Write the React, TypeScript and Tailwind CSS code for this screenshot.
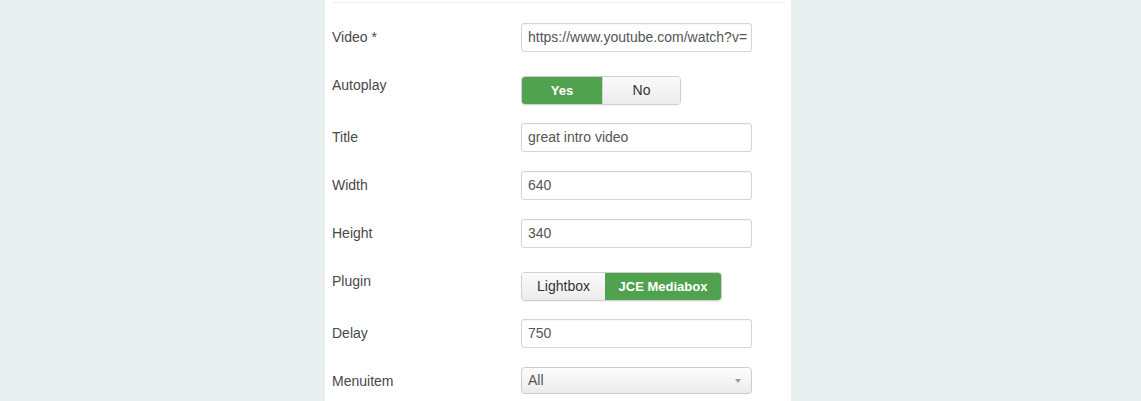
import React from "react";

const FONT = { fontFamily: '"Liberation Sans", Arial, sans-serif' };

function Label({ children }: { children: React.ReactNode }) {
  return <div className="w-[189px] shrink-0 pt-[5px] text-[14px] leading-[18px] text-[#484848]">{children}</div>;
}

function TextRow({ label, value }: { label: string; value: string }) {
  return (
    <div className="flex items-start mb-[19px]">
      <Label>{label}</Label>
      <div className="h-[29px] w-[231px] rounded-[3px] border border-[#d4d4d4] bg-white pl-[6px] flex items-center overflow-hidden shadow-[inset_0_1px_1px_rgba(0,0,0,0.04)]">
        <span className="whitespace-nowrap text-[14px] text-[#555]">{value}</span>
      </div>
    </div>
  );
}

function ToggleRow({ label, options, active }: { label: string; options: { text: string; w: string }[]; active: number }) {
  return (
    <div className="flex items-start mb-[18px]">
      <Label>{label}</Label>
      <div className="mt-[5px] flex h-[29px] rounded-[4px] border border-[#cfcfcf] overflow-hidden shadow-[0_1px_1px_rgba(0,0,0,0.06)]">
        {options.map((o, i) => (
          <div
            key={o.text}
            className={`${o.w} flex items-center justify-center text-[13px] ${
              i === active
                ? "bg-[#51a24f] text-white font-bold"
                : "bg-gradient-to-b from-[#fbfbfb] to-[#ececec] text-[#333] text-[14px]"
            } ${i > 0 && i !== active ? "border-l border-[#d6d6d6]" : ""}`}
          >
            {o.text}
          </div>
        ))}
      </div>
    </div>
  );
}

export default function App() {
  return (
    <div style={FONT} className="h-[401px] w-full overflow-hidden bg-[#e9efef]">
      <div className="ml-[325px] h-[401px] w-[466px] bg-white pl-[7px] pr-[5px]">
        <div className="ml-[1px] h-[3px] border-b border-[#eeeeee]" />
        <div className="pt-[20px]">
          <TextRow label="Video *" value="https://www.youtube.com/watch?v=" />
          <ToggleRow
            label="Autoplay"
            active={0}
            options={[
              { text: "Yes", w: "w-[80px]" },
              { text: "No", w: "w-[78px]" },
            ]}
          />
          <TextRow label="Title" value="great intro video" />
          <TextRow label="Width" value="640" />
          <TextRow label="Height" value="340" />
          <ToggleRow
            label="Plugin"
            active={1}
            options={[
              { text: "Lightbox", w: "w-[83px]" },
              { text: "JCE Mediabox", w: "w-[116px]" },
            ]}
          />
          <TextRow label="Delay" value="750" />
          <div className="flex items-start">
            <Label>Menuitem</Label>
            <div className="relative h-[27px] w-[231px] rounded-[4px] border border-[#cccccc] bg-gradient-to-b from-[#fdfdfd] to-[#ececec] pl-[6px] flex items-center">
              <span className="text-[14px] text-[#555]">All</span>
              <span className="absolute right-[10px] top-[11px] h-0 w-0 border-x-[3px] border-t-[4px] border-x-transparent border-t-[#999]" />
            </div>
          </div>
        </div>
      </div>
    </div>
  );
}
